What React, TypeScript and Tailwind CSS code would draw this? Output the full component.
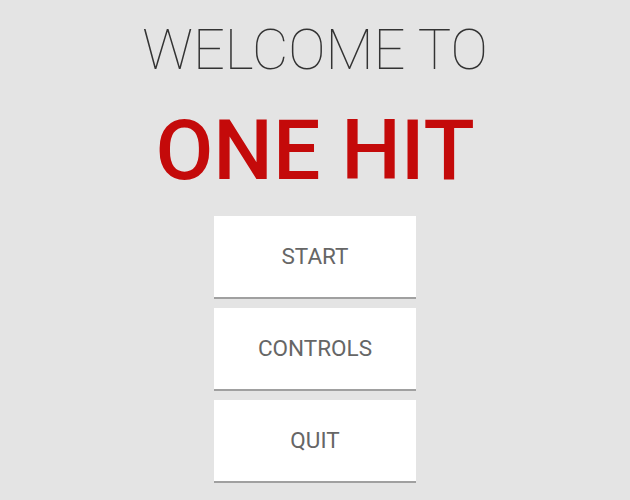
import React from "react";

const MenuButton = ({ label }: { label: string }) => (
  <button className="flex h-[83px] w-[202px] items-center justify-center border-b-2 border-[#a0a0a0] bg-white text-[22.5px] text-[#666] [font-family:Roboto,sans-serif]">
    {label}
  </button>
);

export default function App() {
  return (
    <div className="flex h-[500px] w-[630px] flex-col items-center bg-[#e4e4e4]">
      <h1 className="mt-[19px] text-[56px] font-thin leading-[62px] text-[#333] [font-family:Roboto,sans-serif]">
        WELCOME TO
      </h1>
      <h2 className="mt-[20px] text-[84px] font-medium leading-[100px] text-[#c40a0a] [font-family:Roboto,sans-serif]">
        ONE HIT
      </h2>
      <div className="mt-[15px] flex flex-col gap-[9px]">
        <MenuButton label="START" />
        <MenuButton label="CONTROLS" />
        <MenuButton label="QUIT" />
      </div>
    </div>
  );
}
